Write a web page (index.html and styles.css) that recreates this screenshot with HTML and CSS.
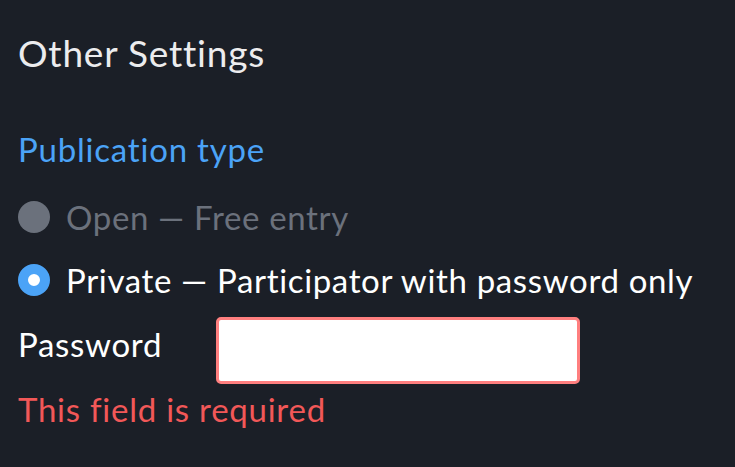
FILE: index.html
```html
<!DOCTYPE html>
<html lang="en">
<head>
<meta charset="utf-8">
<title>Other Settings</title>
<link rel="stylesheet" href="styles.css">
</head>
<body>
<div class="panel">
  <h2 class="title">Other Settings</h2>
  <h3 class="section">Publication type</h3>
  <div class="radios">
    <label class="radio radio-disabled"><span class="dot"></span><span class="radio-text">Open — Free entry</span></label>
    <label class="radio radio-checked"><span class="dot"></span><span class="radio-text">Private — Participator with password only</span></label>
  </div>
  <div class="field">
    <label class="field-label" for="pw">Password</label>
    <input class="field-input" id="pw" type="password">
  </div>
  <div class="error">This field is required</div>
</div>
</body>
</html>
```

FILE: styles.css
```css
html, body {
  margin: 0;
  padding: 0;
  background: #1b1f27;
}
body {
  width: 735px;
  height: 467px;
  overflow: hidden;
  font-family: "Lato", "Noto Sans", sans-serif;
}
.panel {
  padding: 27px 18px 0 18px;
  display: flex;
  flex-direction: column;
}
.title {
  margin: 0;
  font-size: 37px;
  font-weight: 400;
  line-height: 52px;
  letter-spacing: 0.8px;
  color: #ececee;
}
.section {
  margin: 48px 0 0 0;
  font-size: 33px;
  font-weight: 400;
  line-height: 44px;
  letter-spacing: 0.8px;
  color: #4ba3f7;
}
.radios {
  margin-top: 26px;
  display: flex;
  flex-direction: column;
  gap: 23px;
}
.radio {
  display: flex;
  align-items: center;
  gap: 16px;
  font-size: 33px;
  line-height: 40px;
  letter-spacing: 0.65px;
  color: #ffffff;
}
.dot {
  width: 32px;
  height: 32px;
  border-radius: 50%;
  box-sizing: border-box;
  flex: none;
}
.radio-disabled { color: #6b717c; }
.radio-disabled .dot { background: #6b717c; }
.radio-checked .dot {
  background: #ffffff;
  border: 10px solid #4ba3f7;
}
.field {
  margin-top: 17px;
  display: flex;
  align-items: flex-start;
}
.field-label {
  width: 198px;
  margin-top: 7px;
  font-size: 33px;
  line-height: 40px;
  letter-spacing: 0.7px;
  color: #ffffff;
}
.field-input {
  width: 364px;
  height: 67px;
  box-sizing: border-box;
  border: 3px solid #ff7f7f;
  border-radius: 5px;
  background: #ffffff;
  outline: none;
  margin: 0;
}
.error {
  margin-top: 5px;
  font-size: 33px;
  line-height: 40px;
  letter-spacing: 0.75px;
  color: #f25858;
}
```
